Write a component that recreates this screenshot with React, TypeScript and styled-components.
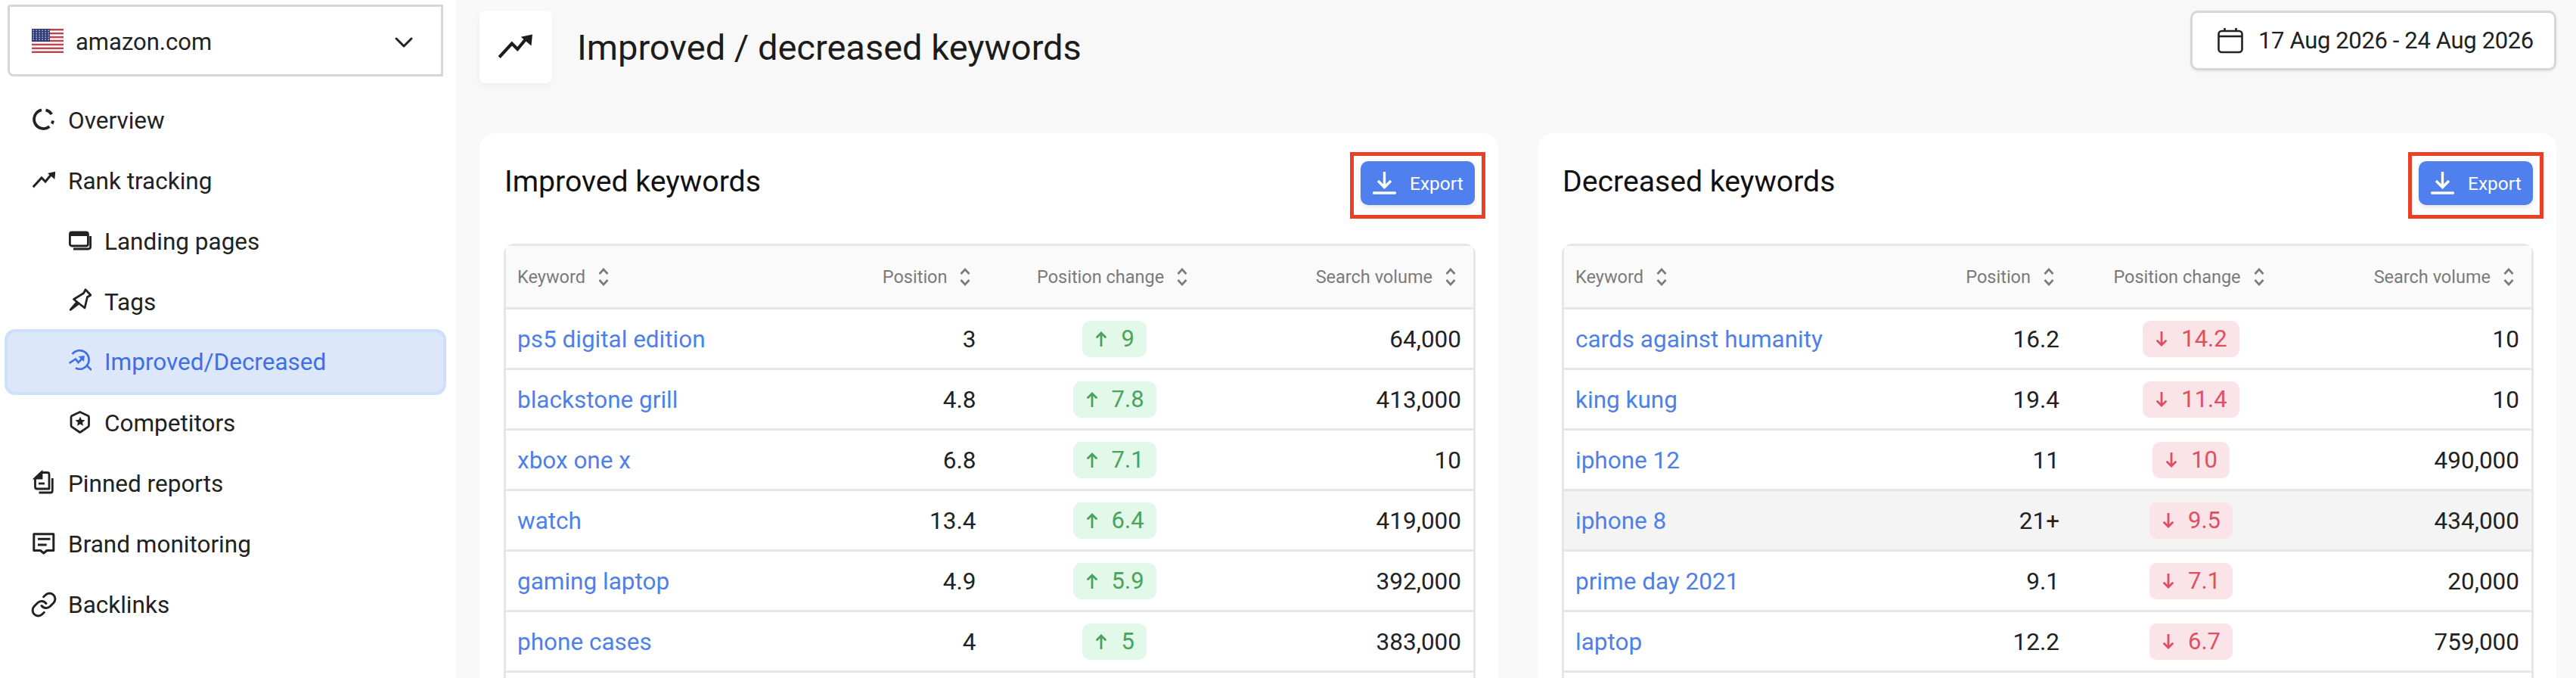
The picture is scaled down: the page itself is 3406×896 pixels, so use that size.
import React from "react";
import styled, { createGlobalStyle } from "styled-components";
import { ChevronDown, Link as LinkIcon } from "lucide-react";

const GlobalStyle = createGlobalStyle`
  html, body {
    margin: 0;
    padding: 0;
    background: #f8f8f8;
  }
  * {
    box-sizing: border-box;
  }
  body {
    font-family: Roboto, "Liberation Sans", sans-serif;
    color: #222;
  }
`;

const Page = styled.div`
  display: flex;
  height: 896px;
  overflow: hidden;
  background: #f8f8f8;
`;

const Sidebar = styled.aside`
  flex: 0 0 602px;
  background: #fff;
  padding: 6px 12px 0 6px;
`;

const SiteSelect = styled.div`
  display: flex;
  align-items: center;
  width: 576px;
  height: 95px;
  margin: 0 0 18px 4px;
  padding: 0 29px 0 29px;
  border: 3px solid #d6d6d6;
  border-radius: 4px 0 0 8px;
  font-size: 31px;
  color: #222;
  > svg:first-child {
    margin-right: 16px;
  }
  > span {
    flex: 1;
    margin-top: 4px;
  }
  > svg:last-child {
    margin-top: 5px;
  }
`;

const Nav = styled.nav`
  display: flex;
  flex-direction: column;
`;

const NavItem = styled.a<{ $nested?: boolean; $active?: boolean }>`
  display: flex;
  align-items: center;
  gap: 17px;
  height: ${(p) => (p.$active ? "87px" : "80px")};
  margin: ${(p) => (p.$active ? "-4px 0 -3px" : "0")};
  padding-left: ${(p) => (p.$nested ? "81px" : "33px")};
  border: 4px solid ${(p) => (p.$active ? "#cfdef9" : "transparent")};
  border-radius: 14px;
  background: ${(p) => (p.$active ? "#dce7fa" : "transparent")};
  color: ${(p) => (p.$active ? "#3f6fe6" : "#222")};
  font-size: 31.5px;
  > svg {
    flex: none;
  }
`;

const BacklinkGlyph = styled(LinkIcon)`
  margin: 0 -3px;
`;

const Main = styled.main`
  flex: 1;
  min-width: 0;
  padding: 14px 26px 0 32px;
`;

const Header = styled.header`
  display: flex;
  justify-content: space-between;
  align-items: flex-start;
  margin-bottom: 66px;
`;

const TitleGroup = styled.div`
  display: flex;
  align-items: center;
  gap: 33px;
`;

const IconTile = styled.div`
  display: flex;
  align-items: center;
  justify-content: center;
  width: 96px;
  height: 96px;
  border-radius: 8px;
  background: #fff;
  box-shadow: 0 4px 10px rgba(0, 0, 0, 0.04);
  color: #1c1c1c;
`;

const PageTitle = styled.h1`
  margin: 0;
  font-size: 47px;
  font-weight: 400;
  color: #1c1c1c;
`;

const DateButton = styled.button`
  display: flex;
  align-items: center;
  gap: 20px;
  width: 484px;
  height: 79px;
  padding: 0 0 0 33px;
  border: 3px solid #d6d6d6;
  border-radius: 10px;
  background: #fff;
  box-shadow: 0 2px 4px rgba(0, 0, 0, 0.06);
  font-family: inherit;
  font-size: 31px;
  letter-spacing: -0.36px;
  color: #222;
`;

const Cards = styled.div`
  display: grid;
  grid-template-columns: 1fr 1fr;
  gap: 52px;
`;

const Card = styled.section`
  height: 760px;
  padding: 0 30px 0 32px;
  border-radius: 20px 20px 0 0;
  background: #fff;
`;

const CardHead = styled.div`
  display: flex;
  justify-content: space-between;
  align-items: center;
  height: 146px;
  padding: 25px 0 33px 1px;
`;

const CardTitle = styled.h2`
  margin: 0 0 10px;
  font-size: 39.2px;
  font-weight: 400;
  color: #111;
`;

const ExportFrame = styled.div`
  margin-right: -13px;
  padding: 7px 9px 13px;
  border: 5px solid #ea4126;
`;

const ExportButton = styled.button`
  display: flex;
  align-items: center;
  gap: 18px;
  width: 151px;
  height: 58px;
  padding: 0 0 0 16px;
  border: 0;
  border-radius: 10px;
  background: #4f80ee;
  box-shadow: 0 3px 6px rgba(0, 0, 0, 0.1);
  color: #fff;
  font-family: inherit;
  font-size: 24.5px;
`;

const Table = styled.table`
  width: 100%;
  table-layout: fixed;
  border-collapse: separate;
  border-spacing: 0;
  border: 3px solid #e6e6ea;
  border-radius: 14px 14px 0 0;
`;

const Col = styled.col<{ $w: number }>`
  width: ${(p) => p.$w}px;
`;

const thRight = { left: "0", right: "23px", center: "6px" };

const Th = styled.th<{ $align: "left" | "right" | "center" }>`
  height: 84px;
  padding: 0 ${(p) => thRight[p.$align]} 0 ${(p) => (p.$align === "left" ? "15px" : "0")};
  text-align: ${(p) => p.$align};
  border-bottom: 3px solid #e6e6ea;
  background: #fafafa;
  font-size: 23.5px;
  font-weight: 400;
  color: #7a7a7a;
`;

const SortWrap = styled.span`
  display: inline-flex;
  align-items: center;
  gap: 17px;
`;

const Row = styled.tr<{ $hover?: boolean }>`
  background: ${(p) => (p.$hover ? "#f4f4f4" : "#fff")};
`;

const Td = styled.td<{ $align: "left" | "right" | "center" }>`
  height: 80px;
  padding: 2px ${(p) => (p.$align === "right" ? "16px" : "0")} 0 ${(p) => (p.$align === "left" ? "15px" : "0")};
  text-align: ${(p) => p.$align};
  border-bottom: 3px solid #e6e6ea;
  font-size: 31.5px;
  color: #222;
`;

const KeywordLink = styled.a`
  color: #4f7fe8;
  text-decoration: none;
`;

const Pill = styled.span<{ $down?: boolean }>`
  display: inline-flex;
  align-items: center;
  gap: 19px;
  height: 48px;
  margin-top: -2px;
  padding: 0 16px 0 18px;
  border-radius: 10px;
  vertical-align: middle;
  background: ${(p) => (p.$down ? "#fae4e7" : "#e2f8e8")};
  color: ${(p) => (p.$down ? "#df4f63" : "#4aa35a")};
  font-size: 31px;
`;

function UsFlag() {
  const stripes = [0, 2, 4, 6, 8, 10, 12];
  return (
    <svg width="42" height="32" viewBox="0 0 42 32">
      <rect width="42" height="32" fill="#fff" />
      {stripes.map((i) => (
        <rect key={i} y={(i * 32) / 13} width="42" height={32 / 13} fill="#b9474f" />
      ))}
      <rect width="24" height="17" fill="#2f3d78" />
      {[2, 6, 10, 14, 18, 22].map((x) =>
        [2, 5, 8, 11, 14].map((y) => (
          <rect key={x + "-" + y} x={x - 0.5} y={y - 0.5} width="1.4" height="1.4" fill="#c9cfe6" />
        ))
      )}
    </svg>
  );
}

// nav icons sit in a 30x36 box so they line up with the row's centre
function NavSvg({ children, strokeWidth = 2.8 }: { children: React.ReactNode; strokeWidth?: number }) {
  return (
    <svg width="30" height="36" viewBox="0 0 30 36" fill="none" stroke="currentColor" strokeWidth={strokeWidth}>
      {children}
    </svg>
  );
}

function TrendPaths() {
  return (
    <>
      <path d="M0.8 26.2 L12 14 L17 19 L25.3 9" />
      <path d="M20 8 L30.3 5.8 L29.3 16 Z" fill="currentColor" stroke="none" />
    </>
  );
}

function TrendIcon() {
  return (
    <NavSvg strokeWidth={3}>
      <TrendPaths />
    </NavSvg>
  );
}

function HeaderTrendIcon() {
  return (
    <svg width="46" height="36" viewBox="0 5 31 24" fill="none" stroke="currentColor" strokeWidth="2.8">
      <TrendPaths />
    </svg>
  );
}

function OverviewIcon() {
  return (
    <NavSvg strokeWidth={3.8}>
      <path d="M12 4.3 A12.5 12.5 0 1 0 22.4 26.3" />
      <path d="M17.5 4.3 A12.5 12.5 0 0 1 25.3 9.9" />
      <path d="M27 18.5 A12.5 12.5 0 0 1 25.7 22.5" />
    </NavSvg>
  );
}

function PagesIcon() {
  return (
    <NavSvg>
      <rect x="1.4" y="6" width="24" height="18" rx="2.5" />
      <path d="M1.4 9 Q1.4 6 4.4 6 H22.4 Q25.4 6 25.4 9 V11 H1.4 Z" fill="currentColor" stroke="none" />
      <path d="M28.6 11 V25 Q28.6 28 25.6 28 H6" />
    </NavSvg>
  );
}

function PinIcon() {
  return (
    <NavSvg>
      <path d="M22 1.8 L29 9 L24.5 11.5 L21 26 L6.5 14.5 L19.5 6.5 Z" strokeLinejoin="round" />
      <path d="M9.5 17.5 L13.5 21.5 L3 29.5 Q0 30.5 1 27.5 Z" fill="currentColor" stroke="none" />
    </NavSvg>
  );
}

function ImprovedIcon() {
  return (
    <NavSvg strokeWidth={2.6}>
      <path d="M4.5 7 A12.3 12.3 0 1 1 9 25.5" />
      <path d="M24 22.3 L30 28" />
      <path d="M0.5 19 L9 13.5 L12.5 18 L19 11.5" />
      <path d="M12.5 10 L20.8 9 L20 17 Z" fill="currentColor" stroke="none" />
    </NavSvg>
  );
}

function ShieldStarIcon() {
  return (
    <NavSvg>
      <path
        d="M14.7 3.5 L25.5 8.5 Q26.5 9 26.5 10.5 V21 Q26.5 22.5 25.5 23.2 L15.5 30 Q14.7 30.5 14 30 L4 23.2 Q3 22.5 3 21 V10.5 Q3 9 4 8.5 Z"
        strokeLinejoin="round"
      />
      <path
        d="M15 9.5 L16.9 13.7 L21.5 14.2 L18 17.2 L19 21.7 L15 19.4 L11 21.7 L12 17.2 L8.5 14.2 L13.1 13.7 Z"
        fill="currentColor"
        stroke="none"
      />
    </NavSvg>
  );
}

function ReportIcon() {
  return (
    <NavSvg>
      <path d="M11.5 3.5 H19.5 Q22 3.5 22 6 V25 H6 Q3.5 25 3.5 22.5 V11 Z" strokeLinejoin="round" />
      <path d="M12 3 V11 H3.5 Z" fill="currentColor" />
      <path d="M8 18 H16" />
      <path d="M26.3 11 V27.5 Q26.3 30 23.8 30 H8.5" />
    </NavSvg>
  );
}

function MessageIcon() {
  return (
    <NavSvg strokeWidth={3}>
      <path d="M1.8 4.8 H27.8 V26.5 H19 L14.7 30 L10.5 26.5 H1.8 Z" strokeLinejoin="round" />
      <path d="M7 11.3 H23.5" />
      <path d="M7 19 H18.7" />
    </NavSvg>
  );
}

function CalendarIcon() {
  return (
    <svg width="34" height="34" viewBox="0 0 34 34" fill="none" stroke="currentColor" strokeWidth="2.6">
      <rect x="1.5" y="4" width="31" height="28" rx="4" />
      <path d="M1.5 11 H32.5" />
      <path d="M9.5 0 V5" />
      <path d="M24.5 0 V5" />
    </svg>
  );
}

function DownloadIcon() {
  return (
    <svg width="31" height="32" viewBox="0 0 31 32" fill="none" stroke="#fff" strokeWidth="3.4">
      <path d="M15.5 1 V21" />
      <path d="M7 13 L15.5 21.5 L24 13" />
      <path d="M1.5 29 H29.5" strokeLinecap="round" />
    </svg>
  );
}

function SortIcon() {
  return (
    <svg width="14" height="24" viewBox="0 0 14 24" fill="none" stroke="currentColor" strokeWidth="2.6">
      <path d="M1.5 8 L7 2 L12.5 8" />
      <path d="M1.5 16 L7 22 L12.5 16" />
    </svg>
  );
}

function ChangeArrow({ down }: { down?: boolean }) {
  return (
    <svg width="14" height="20" viewBox="0 0 14 20" fill="none" stroke="currentColor" strokeWidth="2.8">
      {down ? (
        <path d="M7 0 V18 M1.5 12.5 L7 18 L12.5 12.5" strokeLinecap="round" />
      ) : (
        <path d="M7 20 V2 M1.5 7.5 L7 2 L12.5 7.5" strokeLinecap="round" />
      )}
    </svg>
  );
}

type KeywordRow = {
  keyword: string;
  position: string;
  change: string;
  volume: string;
  hover?: boolean;
};

const improved: KeywordRow[] = [
  { keyword: "ps5 digital edition", position: "3", change: "9", volume: "64,000" },
  { keyword: "blackstone grill", position: "4.8", change: "7.8", volume: "413,000" },
  { keyword: "xbox one x", position: "6.8", change: "7.1", volume: "10" },
  { keyword: "watch", position: "13.4", change: "6.4", volume: "419,000" },
  { keyword: "gaming laptop", position: "4.9", change: "5.9", volume: "392,000" },
  { keyword: "phone cases", position: "4", change: "5", volume: "383,000" },
];

const decreased: KeywordRow[] = [
  { keyword: "cards against humanity", position: "16.2", change: "14.2", volume: "10" },
  { keyword: "king kung", position: "19.4", change: "11.4", volume: "10" },
  { keyword: "iphone 12", position: "11", change: "10", volume: "490,000" },
  { keyword: "iphone 8", position: "21+", change: "9.5", volume: "434,000", hover: true },
  { keyword: "prime day 2021", position: "9.1", change: "7.1", volume: "20,000" },
  { keyword: "laptop", position: "12.2", change: "6.7", volume: "759,000" },
];

function KeywordCard({
  title,
  rows,
  down,
  cols,
}: {
  title: string;
  rows: KeywordRow[];
  down?: boolean;
  cols: number[];
}) {
  return (
    <Card>
      <CardHead>
        <CardTitle>{title}</CardTitle>
        <ExportFrame>
          <ExportButton>
            <DownloadIcon />
            Export
          </ExportButton>
        </ExportFrame>
      </CardHead>
      <Table>
        <colgroup>
          {cols.map((w, i) => (
            <Col key={i} $w={w} />
          ))}
        </colgroup>
        <thead>
          <tr>
            <Th $align="left">
              <SortWrap>
                Keyword <SortIcon />
              </SortWrap>
            </Th>
            <Th $align="right">
              <SortWrap>
                Position <SortIcon />
              </SortWrap>
            </Th>
            <Th $align="center">
              <SortWrap>
                Position change <SortIcon />
              </SortWrap>
            </Th>
            <Th $align="right">
              <SortWrap>
                Search volume <SortIcon />
              </SortWrap>
            </Th>
          </tr>
        </thead>
        <tbody>
          {rows.map((row) => (
            <Row key={row.keyword} $hover={row.hover}>
              <Td $align="left">
                <KeywordLink>{row.keyword}</KeywordLink>
              </Td>
              <Td $align="right">{row.position}</Td>
              <Td $align="center">
                <Pill $down={down}>
                  <ChangeArrow down={down} />
                  {row.change}
                </Pill>
              </Td>
              <Td $align="right">{row.volume}</Td>
            </Row>
          ))}
          <Row>
            <Td $align="left" />
            <Td $align="right" />
            <Td $align="center" />
            <Td $align="right" />
          </Row>
        </tbody>
      </Table>
    </Card>
  );
}

export default function App() {
  return (
    <Page>
      <GlobalStyle />
      <Sidebar>
        <SiteSelect>
          <UsFlag />
          <span>amazon.com</span>
          <ChevronDown size={40} strokeWidth={1.8} />
        </SiteSelect>
        <Nav>
          <NavItem>
            <OverviewIcon />
            Overview
          </NavItem>
          <NavItem>
            <TrendIcon />
            Rank tracking
          </NavItem>
          <NavItem $nested>
            <PagesIcon />
            Landing pages
          </NavItem>
          <NavItem $nested>
            <PinIcon />
            Tags
          </NavItem>
          <NavItem $nested $active>
            <ImprovedIcon />
            Improved/Decreased
          </NavItem>
          <NavItem $nested>
            <ShieldStarIcon />
            Competitors
          </NavItem>
          <NavItem>
            <ReportIcon />
            Pinned reports
          </NavItem>
          <NavItem>
            <MessageIcon />
            Brand monitoring
          </NavItem>
          <NavItem>
            <BacklinkGlyph size={36} strokeWidth={2} />
            Backlinks
          </NavItem>
        </Nav>
      </Sidebar>
      <Main>
        <Header>
          <TitleGroup>
            <IconTile>
              <HeaderTrendIcon />
            </IconTile>
            <PageTitle>Improved / decreased keywords</PageTitle>
          </TitleGroup>
          <DateButton>
            <CalendarIcon />
            17 Aug 2026 - 24 Aug 2026
          </DateButton>
        </Header>
        <Cards>
          <KeywordCard title="Improved keywords" rows={improved} cols={[440, 197, 334, 307]} />
          <KeywordCard title="Decreased keywords" rows={decreased} cols={[470, 201, 316, 292]} down />
        </Cards>
      </Main>
    </Page>
  );
}
